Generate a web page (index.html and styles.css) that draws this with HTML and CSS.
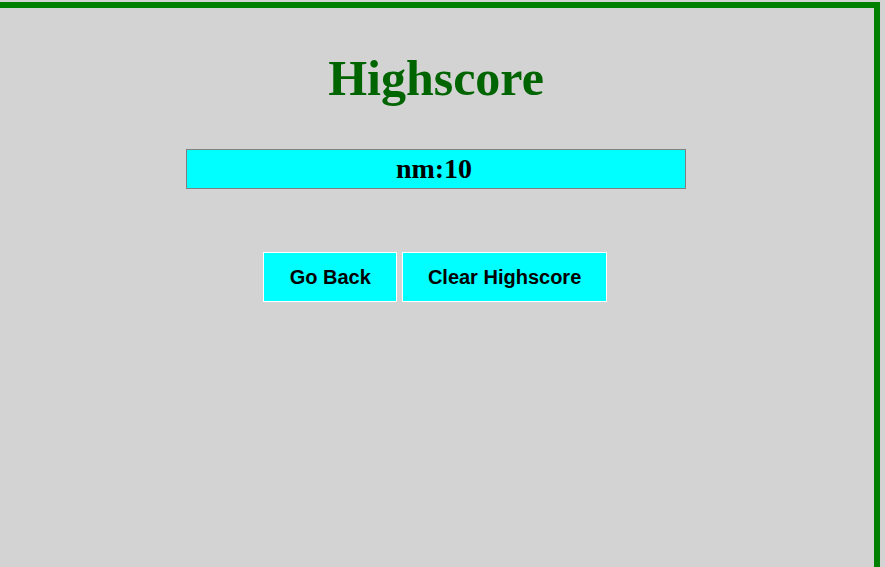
FILE: index.html
```html
<!DOCTYPE html>
<html>
<head>
<meta charset="utf-8">
<link rel="stylesheet" href="styles.css">
</head>
<body>
<div class="frame">
  <h1 class="title">Highscore</h1>
  <div class="score">nm:10</div>
  <div class="actions">
    <button class="btn btn-back">Go Back</button>
    <button class="btn">Clear Highscore</button>
  </div>
</div>
</body>
</html>
```
FILE: styles.css
```css
html, body {
  margin: 0;
  padding: 0;
  background: #d3d3d3;
  overflow: hidden;
}
.frame {
  margin: 2px 5px 0 -8px;
  border: 6px solid #008000;
  border-bottom: none;
  height: 565px;
  box-sizing: border-box;
  display: flex;
  flex-direction: column;
  align-items: center;
  font-family: "Liberation Serif", "Times New Roman", serif;
}
.title {
  margin: 42px 0 0;
  font-size: 50px;
  line-height: 56px;
  font-weight: bold;
  color: #006400;
}
.score {
  margin-top: 43px;
  width: 494px;
  height: 38px;
  padding-right: 4px;
  line-height: 38px;
  background: #00ffff;
  border: 1px solid #808080;
  text-align: center;
  font-size: 28px;
  font-weight: bold;
  color: #000;
}
.actions {
  margin-top: 63px;
  display: flex;
  gap: 5px;
  padding-right: 2px;
}
.btn {
  font-family: "Liberation Sans", Arial, sans-serif;
  font-size: 20px;
  font-weight: bold;
  line-height: 24px;
  padding: 12px 25px;
  background: #00ffff;
  border: 1px solid #ffffff;
  color: #000;
  margin: 0;
}
.btn-back {
  padding-left: 26px;
}
```
